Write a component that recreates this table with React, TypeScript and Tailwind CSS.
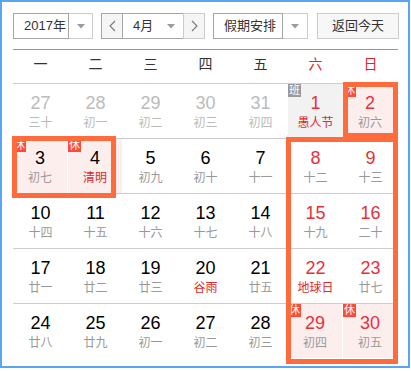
type Day = {
  d: number;
  l: string;
  prev?: boolean;
  fest?: boolean;
  bg?: 'pink' | 'gray';
  badge?: '休' | '班';
};

const rows: Day[][] = [
  [
    { d: 27, l: '三十', prev: true },
    { d: 28, l: '初一', prev: true },
    { d: 29, l: '初二', prev: true },
    { d: 30, l: '初三', prev: true },
    { d: 31, l: '初四', prev: true },
    { d: 1, l: '愚人节', fest: true, bg: 'gray', badge: '班' },
    { d: 2, l: '初六', bg: 'pink', badge: '休' },
  ],
  [
    { d: 3, l: '初七', bg: 'pink', badge: '休' },
    { d: 4, l: '清明', fest: true, bg: 'pink', badge: '休' },
    { d: 5, l: '初九' },
    { d: 6, l: '初十' },
    { d: 7, l: '十一' },
    { d: 8, l: '十二' },
    { d: 9, l: '十三' },
  ],
  [
    { d: 10, l: '十四' },
    { d: 11, l: '十五' },
    { d: 12, l: '十六' },
    { d: 13, l: '十七' },
    { d: 14, l: '十八' },
    { d: 15, l: '十九' },
    { d: 16, l: '二十' },
  ],
  [
    { d: 17, l: '廿一' },
    { d: 18, l: '廿二' },
    { d: 19, l: '廿三' },
    { d: 20, l: '谷雨', fest: true },
    { d: 21, l: '廿五' },
    { d: 22, l: '地球日', fest: true },
    { d: 23, l: '廿七' },
  ],
  [
    { d: 24, l: '廿八' },
    { d: 25, l: '廿九' },
    { d: 26, l: '初一' },
    { d: 27, l: '初二' },
    { d: 28, l: '初三' },
    { d: 29, l: '初四', bg: 'pink', badge: '休' },
    { d: 30, l: '初五', bg: 'pink', badge: '休' },
  ],
];

const weekdays = ['一', '二', '三', '四', '五', '六', '日'];

function Caret() {
  return (
    <svg width="8" height="5" viewBox="0 0 8 5">
      <path d="M0 0h8L4 4.5z" fill="#9a9a9a" />
    </svg>
  );
}

function Chevron({ dir }: { dir: 'l' | 'r' }) {
  return (
    <svg width="7" height="12" viewBox="0 0 7 12">
      <path
        d={dir === 'l' ? 'M6 1L1 6l5 5' : 'M1 1l5 5-5 5'}
        fill="none"
        stroke="#777"
        strokeWidth="1.1"
      />
    </svg>
  );
}

function Cell({ day, col }: { day: Day; col: number }) {
  const weekend = col >= 5;
  const numColor = day.prev ? 'text-[#bbbbbb]' : weekend ? 'text-[#e8303a]' : 'text-black';
  const lunColor = day.prev ? 'text-[#bbbbbb]' : day.fest ? 'text-[#dd2a2a]' : 'text-[#999999]';
  const bg =
    day.bg === 'pink'
      ? 'bg-[#fdeeee] border-r border-white'
      : day.bg === 'gray'
        ? 'bg-[#f2f2f2]'
        : '';

  return (
    <div className={`relative flex h-[54px] flex-col items-center ${bg}`}>
      {day.badge && (
        <span
          className={`absolute left-0 top-0 flex size-[13px] items-center justify-center text-[11px] leading-none text-white ${
            day.badge === '班' ? 'bg-[#999999]' : 'bg-[#ff4a3a]'
          }`}
        >
          {day.badge}
        </span>
      )}
      <span className={`mt-[9px] h-[20px] text-[18px] leading-[20px] ${numColor}`}>{day.d}</span>
      <span className={`mt-[2px] text-[12px] leading-[16px] ${lunColor}`}>{day.l}</span>
    </div>
  );
}

export default function App() {
  return (
    <div className="h-[368px] w-[410px] border-2 border-[#5aa5f2] bg-white pl-[11px] pt-[11px] font-['Liberation_Sans','Noto_Sans_CJK_SC',sans-serif]">
      {/* toolbar */}
      <div className="flex h-[26px] whitespace-nowrap text-[13px] text-[#333333]">
        <div className="flex">
          <div className="flex w-[56px] items-center border border-[#a6a6a6] pl-[10px]">2017年</div>
          <div className="flex w-[24px] items-center justify-center border border-l-0 border-[#cccccc]">
            <Caret />
          </div>
        </div>
        <div className="ml-[8px] flex">
          <div className="flex w-[22px] items-center justify-center border border-[#a6a6a6] bg-[#f5f5f5]">
            <Chevron dir="l" />
          </div>
          <div className="flex w-[60px] items-center justify-between border-y border-[#a6a6a6] pl-[10px] pr-[8px]">
            <span>4月</span>
            <Caret />
          </div>
          <div className="flex w-[22px] items-center justify-center border border-[#cccccc] bg-[#f5f5f5]">
            <Chevron dir="r" />
          </div>
        </div>
        <div className="ml-[8px] flex">
          <div className="flex w-[70px] items-center border border-[#a6a6a6] pl-[10px]">假期安排</div>
          <div className="flex w-[25px] items-center justify-center border border-l-0 border-[#cccccc]">
            <Caret />
          </div>
        </div>
        <button
          type="button"
          className="ml-[9px] flex w-[82px] items-center justify-center border border-[#cccccc] bg-[#f7f7f7] text-[#333333]"
        >
          返回今天
        </button>
      </div>

      <div className="mt-[10px] h-px w-[385px] bg-[#5aa3ee]" />

      {/* weekday header */}
      <div className="grid h-[33px] w-[385px] grid-cols-7 pb-[5px] text-[14px]">
        {weekdays.map((w, i) => (
          <div
            key={w}
            className={`flex items-center justify-center ${i >= 5 ? 'text-[#e02424]' : 'text-[#333333]'}`}
          >
            {w}
          </div>
        ))}
      </div>

      {/* days */}
      <div className="relative w-[385px]">
        {rows.map((row, ri) => (
          <div key={ri} className="grid grid-cols-7 border-t border-[#cccccc]">
            {row.map((day, ci) => (
              <Cell key={ci} day={day} col={ci} />
            ))}
          </div>
        ))}

        {/* holiday outlines */}
        <div className="absolute left-[330px] top-[-1px] h-[56px] w-[55px] border-[5px] border-[#ff6b3d]" />
        <div className="absolute left-[-1px] top-[53px] h-[62px] w-[104px] border-[5px] border-[#ff6b3d]" />
        <div className="absolute left-[273px] top-[54px] h-[227px] w-[112px] border-[5px] border-[#ff6b3d]" />
      </div>
    </div>
  );
}
